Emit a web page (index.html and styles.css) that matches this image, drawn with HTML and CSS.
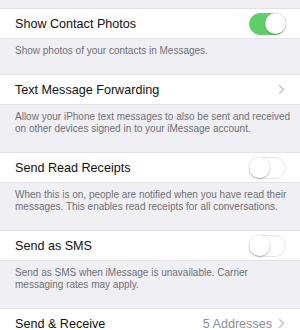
FILE: index.html
```html
<!DOCTYPE html>
<html>
<head>
<meta charset="utf-8">
<link rel="stylesheet" href="styles.css">
</head>
<body>
<div class="page">
  <div class="spacer"></div>
  <div class="row">
    <span class="label">Show Contact Photos</span>
    <span class="toggle on"><span class="knob"></span></span>
  </div>
  <div class="footer">Show photos of your contacts in Messages.</div>

  <div class="row">
    <span class="label">Text Message Forwarding</span>
    <span class="chev"><svg width="7" height="11" viewBox="0 0 7 11"><path d="M1 1 L5.5 5.5 L1 10" fill="none" stroke="#c7c7cc" stroke-width="1.6"/></svg></span>
  </div>
  <div class="footer">Allow your iPhone text messages to also be sent and received<br>on other devices signed in to your iMessage account.</div>

  <div class="row">
    <span class="label">Send Read Receipts</span>
    <span class="toggle"><span class="knob"></span></span>
  </div>
  <div class="footer">When this is on, people are notified when you have read their<br>messages. This enables read receipts for all conversations.</div>

  <div class="row">
    <span class="label">Send as SMS</span>
    <span class="toggle"><span class="knob"></span></span>
  </div>
  <div class="footer">Send as SMS when iMessage is unavailable. Carrier<br>messaging rates may apply.</div>

  <div class="row">
    <span class="label">Send &amp; Receive</span>
    <span class="value">5 Addresses<span class="chev"><svg width="7" height="11" viewBox="0 0 7 11"><path d="M1 1 L5.5 5.5 L1 10" fill="none" stroke="#c7c7cc" stroke-width="1.6"/></svg></span></span>
  </div>
</div>
</body>
</html>
```
FILE: styles.css
```css
html, body {
  margin: 0;
  padding: 0;
  background: #efeff4;
}
.page {
  width: 300px;
  height: 330px;
  overflow: hidden;
  font-family: "Liberation Sans", Arial, sans-serif;
}
.spacer {
  height: 8px;
}
.row {
  height: 31px;
  box-sizing: border-box;
  background: #fff;
  display: flex;
  align-items: center;
  justify-content: space-between;
  padding: 0 14px 0 15px;
  border-top: 1px solid #e2e2e6;
  border-bottom: 1px solid #e2e2e6;
}
.label {
  font-size: 12.6px;
  color: #111;
}
.footer {
  padding: 6px 15px 17px;
  font-size: 10px;
  line-height: 12px;
  color: #707075;
  white-space: nowrap;
}
.toggle {
  width: 37px;
  height: 22px;
  border-radius: 11px;
  box-sizing: border-box;
  border: 1.5px solid #e6e6ea;
  background: #fff;
  position: relative;
  display: block;
}
.toggle .knob {
  position: absolute;
  top: -1px;
  left: -1px;
  width: 21px;
  height: 21px;
  border-radius: 50%;
  background: #fff;
  box-shadow: 0 1px 2px rgba(0,0,0,0.25), 0 0 0 0.5px rgba(0,0,0,0.08);
}
.toggle.on {
  background: #5fcf68;
  border-color: #5fcf68;
}
.toggle.on .knob {
  left: auto;
  right: -1px;
}
.chev {
  display: flex;
  align-items: center;
  padding-right: 1px;
}
.value {
  display: flex;
  align-items: center;
  gap: 6px;
  font-size: 12.6px;
  color: #8e8e93;
}
```
